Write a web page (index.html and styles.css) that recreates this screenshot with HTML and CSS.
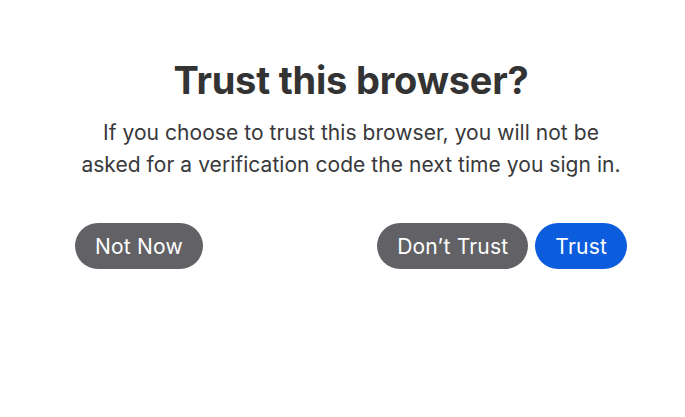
FILE: index.html
```html
<!DOCTYPE html>
<html>
<head>
<meta charset="utf-8">
<link rel="stylesheet" href="styles.css">
</head>
<body>
<div class="dialog">
  <h1 class="title">Trust this browser?</h1>
  <p class="desc">If you choose to trust this browser, you will not be asked for a verification code the next time you sign in.</p>
  <div class="actions">
    <button class="btn btn-gray">Not Now</button>
    <div class="right">
      <button class="btn btn-gray">Don’t Trust</button>
      <button class="btn btn-blue">Trust</button>
    </div>
  </div>
</div>
</body>
</html>
```
FILE: styles.css
```css
html, body {
  margin: 0;
  padding: 0;
  background: #fff;
}
body {
  font-family: Inter, "Noto Sans", sans-serif;
  color: #333;
}
.dialog {
  width: 552px;
  margin-left: 75px;
  padding-top: 56px;
  text-align: center;
}
.title {
  margin: 0;
  font-size: 38px;
  font-weight: 700;
  line-height: 48px;
  letter-spacing: -0.2px;
  color: #333;
}
.desc {
  margin: 13px 0 0;
  font-size: 21px;
  line-height: 32px;
  letter-spacing: 0.05px;
  color: #38383a;
}
.actions {
  margin-top: 42px;
  display: flex;
  justify-content: space-between;
}
.right {
  display: flex;
  gap: 7px;
}
.btn {
  border: 0;
  height: 46px;
  border-radius: 23px;
  padding: 0 20px;
  font-family: inherit;
  font-size: 21px;
  letter-spacing: 0.2px;
  color: #fff;
}
.btn-gray { background: #626266; }
.btn-blue { background: #0b5ddd; }
```
